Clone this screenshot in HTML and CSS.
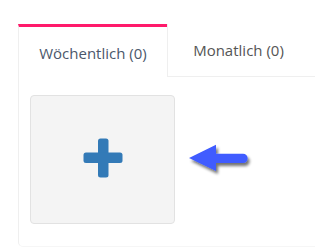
FILE: index.html
```html
<!DOCTYPE html>
<html>
<head>
<meta charset="utf-8">
<link rel="stylesheet" href="styles.css">
</head>
<body>
<div class="page">
  <div class="tabs">
    <div class="tab active">Wöchentlich (0)</div>
    <div class="tab">Monatlich (0)</div>
  </div>
  <div class="panel">
    <div class="row">
      <div class="addbox">
        <svg class="plus" width="40" height="40" viewBox="0 0 40 40">
          <rect x="15" y="0.5" width="10.5" height="39" rx="2.5" fill="#337ab7"/>
          <rect x="0.5" y="14.5" width="39" height="10.5" rx="2.5" fill="#337ab7"/>
        </svg>
      </div>
      <svg class="arrow" width="66" height="34" viewBox="0 0 66 34">
        <defs>
          <filter id="sh" x="-20%" y="-30%" width="150%" height="180%">
            <feGaussianBlur in="SourceAlpha" stdDeviation="1.6"/>
            <feOffset dx="2" dy="2.5" result="b"/>
            <feComponentTransfer><feFuncA type="linear" slope="0.55"/></feComponentTransfer>
            <feMerge><feMergeNode/><feMergeNode in="SourceGraphic"/></feMerge>
          </filter>
        </defs>
        <g filter="url(#sh)">
          <path d="M1 14 L28 0.7 L28 9.7 L55 9.7 A4.6 4.6 0 0 1 55 19 L28 19 L28 27 Z" fill="#3f5bff"/>
        </g>
      </svg>
    </div>
  </div>
</div>
</body>
</html>
```

FILE: styles.css
```css
html, body {
  margin: 0;
  padding: 0;
  background: #fff;
}
.page {
  padding: 24px 0 0 18px;
  height: 248px;
  box-sizing: border-box;
  font-family: "Open Sans", "Lato", sans-serif;
}
.tabs {
  display: flex;
}
.tab {
  box-sizing: border-box;
  height: 53px;
  display: flex;
  align-items: center;
  justify-content: center;
  font-size: 15px;
  color: #555;
  padding-top: 1px;
}
.tab.active {
  width: 149px;
  border-top: 3px solid #ff1a6b;
  border-left: 1px solid #efefef;
  color: #4b576b;
}
.tab:not(.active) {
  flex: 1;
  border-left: 1px solid #efefef;
  border-bottom: 1px solid #efefef;
  padding: 0 6px 0 0;
}
.panel {
  border-left: 1px solid #efefef;
  border-bottom: 1px solid #f6f6f6;
  border-bottom-left-radius: 5px;
  height: 170px;
  box-sizing: border-box;
  padding: 18px 0 0 11px;
}
.row {
  display: flex;
  align-items: center;
  gap: 13px;
}
.addbox {
  width: 145px;
  height: 129px;
  box-sizing: border-box;
  background: #f4f4f4;
  border: 1px solid #e2e2e2;
  border-radius: 4px;
  display: flex;
  align-items: center;
  justify-content: center;
  padding-bottom: 4px;
}
.plus {
  display: block;
}
.arrow {
  display: block;
  margin-top: 2px;
}
```
